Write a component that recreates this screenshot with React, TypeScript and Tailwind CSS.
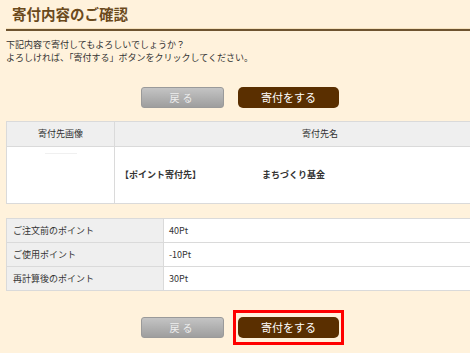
export default function App() {
  const font = { fontFamily: '"Noto Sans CJK JP", "DejaVu Sans", sans-serif' };

  const points = [
    { label: "ご注文前のポイント", value: "40Pt" },
    { label: "ご使用ポイント", value: "-10Pt" },
    { label: "再計算後のポイント", value: "30Pt" },
  ];

  return (
    <div className="w-[470px] h-[353px] overflow-hidden bg-[#fff2dc] text-[#333]" style={font}>
      <div className="ml-[6px] w-[520px]">
        {/* Title */}
        <div className="h-[31px] pt-[4px] pl-[6px] border-b-[2px] border-[#6e5430] shadow-[0_-1px_0_#f6e2bd_inset]">
          <h1 className="text-[14.5px] leading-[20px] font-bold text-[#6b4a1c]">寄付内容のご確認</h1>
        </div>

        <p className="mt-[7px] text-[9px] leading-[13px]">
          下記内容で寄付してもよろしいでしょうか？
          <br />
          よろしければ、「寄付する」ボタンをクリックしてください。
        </p>

        {/* Buttons top */}
        <div className="mt-[23px] flex items-center pl-[135px] gap-[14px]">
          <GrayButton />
          <BrownButton />
        </div>

        {/* Donation target table */}
        <table className="mt-[13px] w-[520px] border-collapse text-[9px]">
          <thead>
            <tr className="h-[25px] bg-[#efefef]">
              <th className="w-[108px] border border-[#dadada] font-normal text-center">寄付先画像</th>
              <th className="border border-[#dadada] font-normal text-center">寄付先名</th>
            </tr>
          </thead>
          <tbody>
            <tr className="h-[57px] bg-white">
              <td className="border border-[#dadada] align-top">
                <div className="mx-auto mt-[6px] h-px w-[32px] bg-[#f0f0f0]" />
              </td>
              <td className="border border-[#dadada] pl-[5px]">
                <div className="flex font-bold">
                  <span className="w-[142px]">【ポイント寄付先】</span>
                  <span>まちづくり基金</span>
                </div>
              </td>
            </tr>
          </tbody>
        </table>

        {/* Points table */}
        <table className="mt-[14px] w-[520px] border-collapse text-[9px]">
          <tbody>
            {points.map((p) => (
              <tr key={p.label} className="h-[24px]">
                <td className="w-[157px] bg-[#efefef] border border-[#dadada] pl-[6px]">{p.label}</td>
                <td className="bg-white border border-[#dadada] pl-[5px]">{p.value}</td>
              </tr>
            ))}
          </tbody>
        </table>

        {/* Buttons bottom */}
        <div className="mt-[19px] flex items-center pl-[135px] gap-[9px]">
          <GrayButton />
          <div className="border-[3px] border-[#ff0000] px-[2px] py-[4px]">
            <BrownButton />
          </div>
        </div>
      </div>
    </div>
  );
}

function GrayButton() {
  return (
    <button
      type="button"
      className="w-[83px] h-[21px] rounded-[3px] border border-[#9a9a9a] bg-gradient-to-b from-[#c4c4c4] to-[#9e9e9e] text-[10px] leading-none text-[#eeeeee] tracking-[3px] flex items-center justify-center"
    >
      戻る
    </button>
  );
}

function BrownButton() {
  return (
    <button
      type="button"
      className="w-[101px] h-[21px] rounded-[5px] bg-[#5a2f00] text-[11px] leading-none text-white flex items-center justify-center"
    >
      寄付をする
    </button>
  );
}
